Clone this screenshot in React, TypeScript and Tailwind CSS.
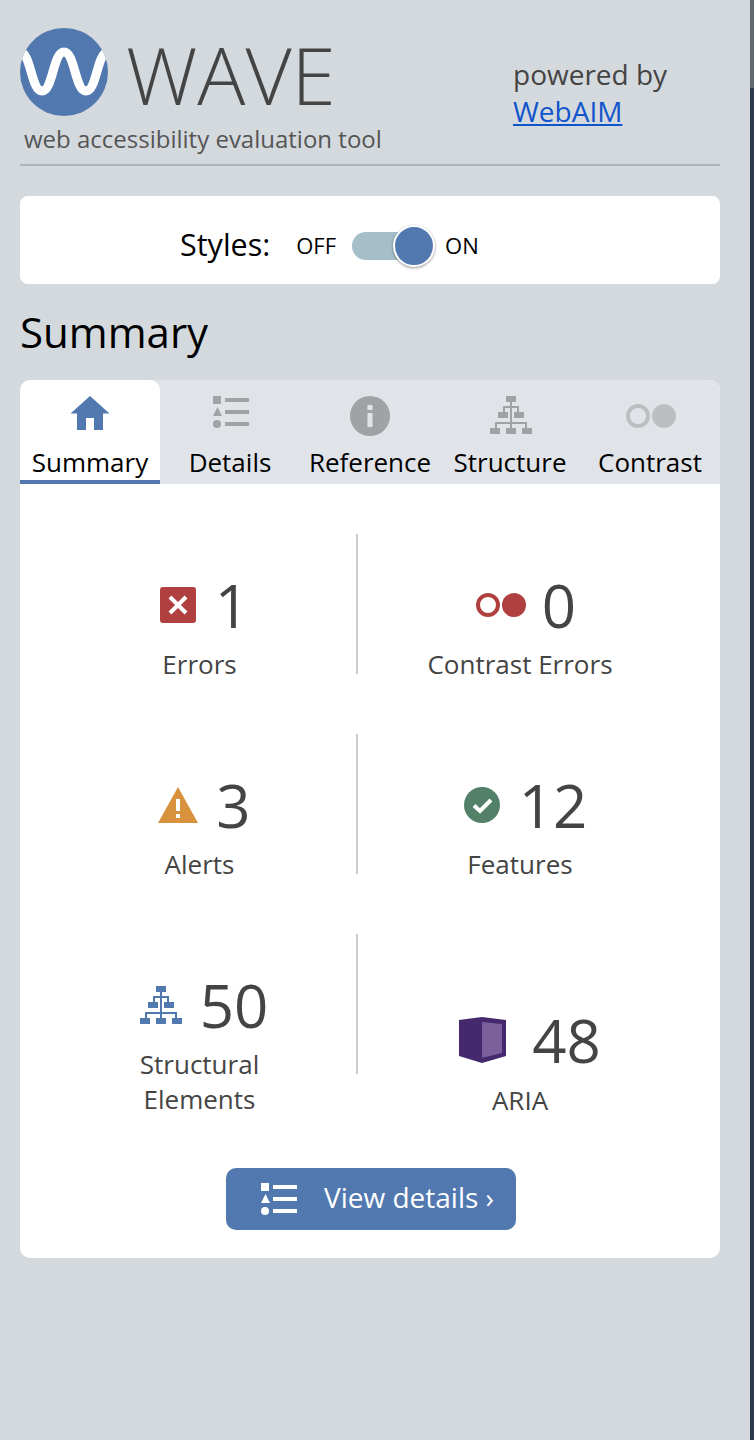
const font = { fontFamily: '"Open Sans", "Noto Sans", sans-serif' };

function HomeIcon() {
  return (
    <svg width="40" height="34" viewBox="0 0 40 34" className="block">
      <path fill="#5278b0" d="M20 0 L39.5 17.5 L33 17.5 L33 34 L24 34 L24 22 L16 22 L16 34 L7 34 L7 17.5 L0.5 17.5 Z" />
    </svg>
  );
}

function ListIcon({ color }: { color: string }) {
  return (
    <svg width="36" height="32" viewBox="0 0 36 32" className="block">
      <rect x="0" y="0" width="8" height="8" fill={color} />
      <path d="M4.5 11 L9 20 L0 20 Z" fill={color} />
      <circle cx="4" cy="28" r="4" fill={color} />
      <rect x="12" y="2" width="24" height="4" fill={color} />
      <rect x="12" y="14" width="24" height="4" fill={color} />
      <rect x="12" y="26" width="24" height="4" fill={color} />
    </svg>
  );
}

function InfoIcon() {
  return (
    <svg width="40" height="40" viewBox="0 0 40 40" className="block">
      <circle cx="20" cy="20" r="20" fill="#a1a2a5" />
      <rect x="17.5" y="9" width="5" height="5" fill="#e0e4e9" />
      <rect x="17.5" y="17" width="5" height="14" fill="#e0e4e9" />
    </svg>
  );
}

function TreeIcon({ color }: { color: string }) {
  return (
    <svg width="42" height="38" viewBox="0 0 42 38" className="block">
      <rect x="16" y="0" width="10" height="6" fill={color} />
      <rect x="20" y="6" width="2" height="26" fill={color} />
      <rect x="13" y="10" width="16" height="2" fill={color} />
      <rect x="13" y="10" width="2" height="8" fill={color} />
      <rect x="27" y="10" width="2" height="8" fill={color} />
      <rect x="8" y="16" width="10" height="6" fill={color} />
      <rect x="24" y="16" width="10" height="6" fill={color} />
      <rect x="5" y="26" width="32" height="2" fill={color} />
      <rect x="5" y="26" width="2" height="6" fill={color} />
      <rect x="35" y="26" width="2" height="6" fill={color} />
      <rect x="0" y="32" width="10" height="6" fill={color} />
      <rect x="16" y="32" width="10" height="6" fill={color} />
      <rect x="32" y="32" width="10" height="6" fill={color} />
    </svg>
  );
}

function DotsIcon({ color }: { color: string }) {
  return (
    <svg width="50" height="24" viewBox="0 0 50 24" className="block">
      <circle cx="12" cy="12" r="10" fill="none" stroke={color} strokeWidth="4" />
      <circle cx="38" cy="12" r="12" fill={color} />
    </svg>
  );
}

function ErrorIcon() {
  return (
    <svg width="36" height="36" viewBox="0 0 36 36" className="block">
      <rect width="36" height="36" rx="3" fill="#b04040" />
      <path d="M10 10 L26 26 M26 10 L10 26" stroke="#fff" strokeWidth="4" />
    </svg>
  );
}

function AlertIcon() {
  return (
    <svg width="40" height="36" viewBox="0 0 40 36" className="block">
      <path d="M20 0 L40 36 L0 36 Z" fill="#d8913c" />
      <rect x="18" y="12" width="4" height="12" fill="#fff" />
      <rect x="18" y="27" width="4" height="4" fill="#fff" />
    </svg>
  );
}

function CheckIcon() {
  return (
    <svg width="36" height="36" viewBox="0 0 36 36" className="block">
      <circle cx="18" cy="18" r="18" fill="#528068" />
      <path d="M10 18.5 L16 24 L27 13" fill="none" stroke="#fff" strokeWidth="4" />
    </svg>
  );
}

function AriaIcon() {
  return (
    <svg width="47" height="46" viewBox="0 0 47 46" className="block">
      <path d="M0 3 L23 0 L47 3 L47 39 L23 46 L0 39 Z" fill="#44296f" />
      <path d="M23 5 L43 7 L43 36 L23 41 Z" fill="#7a5f9a" />
    </svg>
  );
}

function Tab({ label, icon, active }: { label: string; icon: React.ReactNode; active?: boolean }) {
  return (
    <div className={active
      ? "flex h-[104px] w-[140px] flex-col items-center rounded-t-[10px] border-b-4 border-[#5278b0] bg-white"
      : "flex h-[104px] w-[140px] flex-col items-center"}>
      <div className="h-[67px] pt-4">{icon}</div>
      <div className="text-[26px] leading-[30px] text-black">{label}</div>
    </div>
  );
}

function Stat({ icon, value, label, row, divider, top }: {
  icon: React.ReactNode;
  value: string;
  label: React.ReactNode;
  row: string;
  divider?: boolean;
  top?: string;
}) {
  return (
    <div className={`h-[140px] ${divider ? "border-r-2 border-[#c9cdd0] pl-[3px]" : ""}`}>
      <div className={`flex flex-col items-center ${top ?? "pt-[29px]"}`}>
        <div className={`flex h-[84px] items-center ${row}`}>
          {icon}
          <span className="text-[60px] leading-[84px] text-[#444]">{value}</span>
        </div>
        <div className="text-center text-[26px] leading-[35px] text-[#444]">{label}</div>
      </div>
    </div>
  );
}

export default function App() {
  return (
    <div className="flex h-[1440px] w-[754px]" style={font}>
      <div className="h-full w-[750px] bg-[#d4d9dd] pt-7 pr-[30px] pl-5">
        <div className="flex border-b-2 border-[#b0b5b9] pb-2">
          <div className="w-[493px]">
            <div className="flex h-[88px] items-center gap-[18px]">
              <svg width="88" height="88" viewBox="0 0 88 88" className="block">
                <defs>
                  <clipPath id="logo"><circle cx="44" cy="44" r="44" /></clipPath>
                </defs>
                <circle cx="44" cy="44" r="44" fill="#5278b0" />
                <path
                  clipPath="url(#logo)"
                  d="M0 24 C11 24 11 63 22 63 C33 63 33 24 44 24 C55 24 55 63 66 63 C77 63 77 24 88 24"
                  fill="none"
                  stroke="#fff"
                  strokeWidth="9"
                />
              </svg>
              <span className="pt-1 text-[80px] leading-[80px] font-light text-[#444]">WAVE</span>
            </div>
            <div className="pt-[6px] pl-1 text-[24px] leading-[34px] text-[#555]">web accessibility evaluation tool</div>
          </div>
          <div className="pt-7 text-[28px] leading-[37px] text-[#444]">
            <div>powered by</div>
            <a href="#" className="text-[#1155cc] underline">WebAIM</a>
          </div>
        </div>

        <div className="mt-[30px] flex h-[88px] items-center rounded-lg bg-white pt-3 pl-[160px]">
          <span className="mb-[3px] text-[30.5px] leading-none text-black">Styles:</span>
          <span className="mb-[2px] ml-[26px] text-[22px] leading-none text-black">OFF</span>
          <div className="relative ml-4 h-7 w-[68px] rounded-full bg-[#a5bfca]">
            <div className="absolute top-[-7px] left-[41px] h-[42px] w-[42px] rounded-full border-2 border-white bg-[#5278b0] shadow-[0_1px_3px_rgba(0,0,0,0.4)]" />
          </div>
          <span className="mb-[2px] ml-[25px] text-[22px] leading-none text-black">ON</span>
        </div>

        <h1 className="mt-[22px] text-[42px] leading-[52px] text-black">Summary</h1>

        <div className="mt-[22px] overflow-hidden rounded-[10px] bg-white">
          <div className="flex bg-[#e0e4e9]">
            <Tab label="Summary" active icon={<HomeIcon />} />
            <Tab label="Details" icon={<div className="pl-[2px]"><ListIcon color="#a1a2a5" /></div>} />
            <Tab label="Reference" icon={<InfoIcon />} />
            <Tab label="Structure" icon={<div className="pl-[2px]"><TreeIcon color="#a1a2a5" /></div>} />
            <Tab label="Contrast" icon={<div className="pt-2 pl-[2px]"><DotsIcon color="#bdbec1" /></div>} />
          </div>

          <div className="grid grid-cols-[318px_324px] gap-y-[60px] pt-[50px] pl-5">
            <Stat divider row="gap-[19px] pl-[10px]" icon={<ErrorIcon />} value="1" label="Errors" />
            <Stat row="gap-4 pl-3" icon={<DotsIcon color="#b04040" />} value="0" label="Contrast Errors" />
            <Stat divider row="gap-[18px] pl-[10px]" icon={<AlertIcon />} value="3" label="Alerts" />
            <Stat row="gap-[19px] pl-[11px]" icon={<CheckIcon />} value="12" label="Features" />
            <Stat
              divider
              row="gap-[18px] pl-[9px]"
              icon={<TreeIcon color="#5278b0" />}
              value="50"
              label={<>Structural<br />Elements</>}
            />
            <Stat top="pt-[64px]" row="mb-px gap-[26px] pl-5" icon={<AriaIcon />} value="48" label="ARIA" />
          </div>

          <div className="mt-[94px] flex justify-center pb-7 pl-[2px]">
            <div className="flex h-[62px] w-[290px] items-center rounded-[10px] bg-[#5278b0] pl-[35px] text-white">
              <ListIcon color="#fff" />
              <span className="mb-1 ml-[27px] text-[28px]">View details ›</span>
            </div>
          </div>
        </div>
      </div>
      <div className="flex h-full w-1 flex-col">
        <div className="h-[88px] bg-[#5f686f]" />
        <div className="flex-1 bg-[#2c3a4d]" />
      </div>
    </div>
  );
}
